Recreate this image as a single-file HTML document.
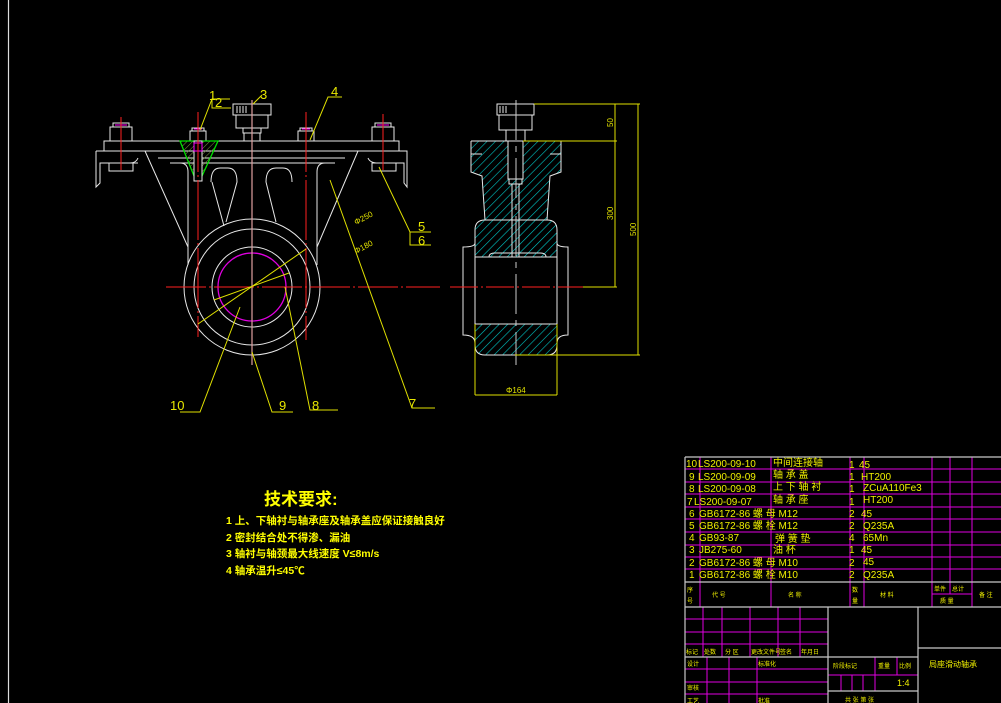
<!DOCTYPE html>
<html><head><meta charset="utf-8"><style>
html,body{margin:0;padding:0;background:#000;width:1001px;height:703px;overflow:hidden}
svg{display:block}
text{font-family:"Liberation Sans","Noto Sans CJK SC",sans-serif}
</style></head><body>
<svg width="1001" height="703" viewBox="0 0 1001 703" xmlns="http://www.w3.org/2000/svg">
<defs>
<pattern id="hc" width="6" height="6" patternUnits="userSpaceOnUse" patternTransform="rotate(45)"><line x1="0" y1="0" x2="0" y2="6" stroke="#00c8c8" stroke-width="1.2"/></pattern>
<pattern id="hg" width="4" height="4" patternUnits="userSpaceOnUse" patternTransform="rotate(45)"><line x1="0" y1="0" x2="0" y2="4" stroke="#7a9a40" stroke-width="1"/></pattern>
</defs>
<line x1="8.5" y1="0" x2="8.5" y2="703" stroke="#ddd" stroke-width="1.2"/>

<!-- FRONT VIEW -->
<g fill="none" stroke="#e8e8e8" stroke-width="1">
<!-- top plate -->
<rect x="104" y="141" width="295" height="10"/>
<path d="M96 151 H407 V187 L404 183 V163 H399 M96 151 V187 L100 183 V163 H138"/>
<path d="M100 163 H118 M138 158 Q136 163 130 163 M368 158 Q370 163 378 163 H404"/>
<!-- body -->
<path d="M145 151 L188 247 V265 M358 151 L317 247 V265"/>
<path d="M158 158 H345 M170 163 H335"/>
<path d="M180 163 Q188 163 188 172 V247 M317 247 V172 Q317 163 325 163"/>
<path d="M211 182 Q211 168 220 168 H228 Q237 168 237 182 L226 222 M292 182 Q292 168 283 168 H276 Q266 168 266 182 L276 222"/>
<path d="M212 182 L224 226"/>
<!-- circles -->
<circle cx="252" cy="287" r="68"/>
<circle cx="252" cy="287" r="58"/>
<circle cx="252" cy="287" r="40"/>
<!-- nuts -->
<rect x="110" y="127" width="22" height="14"/><rect x="113" y="123" width="16" height="4"/>
<rect x="372" y="127" width="22" height="14"/><rect x="375" y="123" width="16" height="4"/>
<rect x="109" y="163" width="24" height="8"/><rect x="372" y="163" width="24" height="8"/>
<rect x="190" y="131" width="16" height="10"/><rect x="192" y="128" width="12" height="3"/>
<rect x="298" y="131" width="16" height="10"/><rect x="300" y="128" width="12" height="3"/>
<!-- oil cup -->
<rect x="233" y="104" width="38" height="11"/>
<path d="M236 115 V128 H268 V115 M243 128 V133 H261 V128 M244 133 V141 M260 133 V141"/>
<path d="M237 106 V113 M240 106 V113 M243 106 V113 M246 106 V113"/>
</g>
<!-- green hatch -->
<path d="M180 141 H218 L202 176 Q198 182 194 176 Z" fill="url(#hg)" stroke="#00e000" stroke-width="1.3"/>
<rect x="194" y="141" width="8" height="40" fill="#000" stroke="#e8e8e8"/>
<rect x="194" y="143" width="8" height="8" fill="none" stroke="#ff00ff"/>
<path d="M115 125 H127 M377 125 H389 M194 129 H202 M302 129 H310" stroke="#ff00ff"/>
<circle cx="252" cy="287" r="34" fill="none" stroke="#e000e0" stroke-width="1.3"/>
<!-- centerlines -->
<g stroke="#ff2020" stroke-width="1">
<line x1="166" y1="287" x2="440" y2="287" stroke-dasharray="40 3 2 3"/>
<line x1="198" y1="112" x2="198" y2="337" stroke-dasharray="60 3 2 3"/>
<line x1="306" y1="112" x2="306" y2="340" stroke-dasharray="60 3 2 3"/>
<line x1="121" y1="117" x2="121" y2="170"/>
<line x1="383" y1="114" x2="383" y2="170"/>
</g>
<line x1="252" y1="100" x2="252" y2="365" stroke="#e0a0a0" stroke-width="1.2"/>
<!-- leaders -->
<g stroke="#e0e000" fill="none" stroke-width="1">
<path d="M200 130 L212 99 H230 M212 99 V108 H231"/>
<path d="M253 104 L262 95"/>
<path d="M310 140 L328 97 H342"/>
<path d="M379 167 L410 232 H431 M410 232 V245 H431"/>
<path d="M330 180 L412 408 H435"/>
<path d="M285 287 L310 410 H338"/>
<path d="M252 352 L272 412 H293"/>
<path d="M240 307 L200 412 H180"/>
<path d="M198 324 L306 249 M214 300 L289 273"/>
</g>
<g fill="#e8e800" font-size="13">
<text x="209" y="100">1</text><text x="215" y="107">2</text><text x="260" y="99">3</text><text x="331" y="96">4</text>
<text x="418" y="231">5</text><text x="418" y="245">6</text>
<text x="409" y="408">7</text><text x="312" y="410">8</text><text x="279" y="410">9</text><text x="170" y="410">10</text>
</g>
<g fill="#e0e000" font-size="8">
<text x="356" y="225" transform="rotate(-28 356 225)">Φ250</text>
<text x="356" y="254" transform="rotate(-28 356 254)">Φ180</text>
</g>

<!-- SIDE VIEW -->
<path d="M471 141 H561 V172 L550 176 L547 220 H485 L482 176 L471 172 Z" fill="url(#hc)"/>
<path d="M485 220 H547 Q557 220 557 230 V257 H475 V230 Q475 220 485 220 Z" fill="url(#hc)"/>
<path d="M475 324 H557 V345 Q557 355 547 355 H485 Q475 355 475 345 Z" fill="url(#hc)"/>
<g fill="none" stroke="#e8e8e8" stroke-width="1">
<path d="M471 141 H561 V172 L550 176 L547 220 M471 141 V172 L482 176 L485 220"/>
<path d="M482 154 H471 M550 154 H561"/>
<path d="M485 220 H547 Q557 220 557 230 V345 Q557 355 547 355 H485 Q475 355 475 345 V230 Q475 220 485 220"/>
<path d="M475 257 H557 M475 324 H557"/>
<path d="M475 243 Q475 247 463 247 V335 Q475 335 475 343 M557 243 Q557 247 568 247 V335 Q557 335 557 343"/>
<rect x="497" y="104" width="37" height="11"/>
<path d="M499 115 V130 H532 V115 M506 130 V141 M525 130 V141"/>
<rect x="508" y="141" width="15" height="38" fill="#000"/>
<path d="M509 179 V184 H522 V179 M512 184 V257 M519 184 V257"/>
<path d="M489 257 Q489 253 495 253 H540 Q546 253 546 257"/>
<path d="M500 106 V113 M503 106 V113 M506 106 V113"/>
</g>
<line x1="516" y1="100" x2="516" y2="365" stroke="#ccc" stroke-dasharray="40 6 6 6"/>
<line x1="450" y1="287" x2="583" y2="287" stroke="#ff2020" stroke-dasharray="28 3 2 3"/>
<g stroke="#e0e000" fill="none" stroke-width="1">
<path d="M534 104 H640 M523 141 H617 M583 287 H617 M515 355 H640"/>
<path d="M615 104 V287 M638 104 V355"/>
<path d="M475 324 V395 M557 324 V395 M475 395 H557"/>
</g>
<g fill="#e0e000" font-size="8">
<text x="613" y="127" transform="rotate(-90 613 127)">50</text>
<text x="613" y="220" transform="rotate(-90 613 220)">300</text>
<text x="636" y="236" transform="rotate(-90 636 236)">500</text>
<text x="506" y="393">Φ164</text>
</g>

<!-- TECH REQUIREMENTS -->
<g fill="#ffff00" font-weight="bold">
<text x="264" y="505" font-size="17">技术要求:</text>
<g font-size="10.5">
<text x="226" y="524">1  上、下轴衬与轴承座及轴承盖应保证接触良好</text>
<text x="226" y="541">2  密封结合处不得渗、漏油</text>
<text x="226" y="557">3  轴衬与轴颈最大线速度 V≤8m/s</text>
<text x="226" y="574">4  轴承温升≤45℃</text>
</g></g>

<!-- TABLE -->
<g stroke="#e000e0" stroke-width="1" fill="none">
<path d="M685 469H1001M685 482H1001M685 494H1001M685 507H1001M685 519H1001M685 532H1001M685 545H1001M685 557H1001M685 569H1001M685 582H1001"/>
<path d="M700 457V607M771 457V607M850 457V607M864 457V607M932 457V607M950 457V594M972 457V607M932 594H972"/>
<path d="M685 619H828M685 632H828M685 644H828M685 669H828M685 682H828M685 694H828"/>
<path d="M703 607V657M722 607V657M750 607V657M778 607V657M800 607V657"/>
<path d="M707 657V703M729 657V703M757 657V703"/>
<path d="M828 675H918M875 657V691M897 657V675M841 675V691M852 675V691M863 675V691"/>
</g>
<g stroke="#c8c8c8" stroke-width="1.2" fill="none">
<path d="M685 457H1001M685 457V703M685 582H1001M685 607H1001M685 657H918M828 607V703M918 607V703M918 648H1001M828 691H918"/>
</g>
<g fill="#f0f000" font-size="10">
<text x="686" y="467">10</text><text x="698" y="467">LS200-09-10</text><text x="773" y="466">中间连接轴</text><text x="849" y="468">1</text><text x="859" y="468">45</text>
<text x="689" y="480">9</text><text x="698" y="480">LS200-09-09</text><text x="773" y="478">轴  承  盖</text><text x="849" y="480">1</text><text x="861" y="480">HT200</text>
<text x="689" y="492">8</text><text x="698" y="492">LS200-09-08</text><text x="773" y="490">上 下 轴 衬</text><text x="849" y="492">1</text><text x="863" y="491">ZCuA110Fe3</text>
<text x="687" y="505">7</text><text x="694" y="505">LS200-09-07</text><text x="773" y="503">轴  承  座</text><text x="849" y="505">1</text><text x="863" y="503">HT200</text>
<text x="689" y="517">6</text><text x="699" y="517">GB6172-86  螺 母     M12</text><text x="849" y="517">2</text><text x="861" y="517">45</text>
<text x="689" y="529">5</text><text x="699" y="529">GB6172-86  螺 栓     M12</text><text x="849" y="529">2</text><text x="863" y="529">Q235A</text>
<text x="689" y="541">4</text><text x="699" y="541">GB93-87</text><text x="775" y="542">弹   簧   垫</text><text x="849" y="541">4</text><text x="863" y="541">65Mn</text>
<text x="689" y="553">3</text><text x="699" y="553">JB275-60</text><text x="773" y="553">油      杯</text><text x="849" y="553">1</text><text x="861" y="553">45</text>
<text x="689" y="566">2</text><text x="699" y="566">GB6172-86  螺 母     M10</text><text x="849" y="566">2</text><text x="863" y="565">45</text>
<text x="689" y="578">1</text><text x="699" y="578">GB6172-86  螺 栓     M10</text><text x="849" y="578">2</text><text x="863" y="578">Q235A</text>
</g>
<g fill="#f0f000" font-size="6">
<text x="687" y="592">序</text><text x="687" y="603">号</text><text x="712" y="597">代       号</text><text x="788" y="597">名       称</text>
<text x="852" y="592">数</text><text x="852" y="603">量</text><text x="880" y="597">材       料</text>
<text x="934" y="591">单件</text><text x="952" y="591">总计</text><text x="940" y="603">质   量</text><text x="979" y="597">备 注</text>
<text x="686" y="654">标记</text><text x="704" y="654">处数</text><text x="725" y="654">分  区</text><text x="751" y="654">更改文件号</text><text x="780" y="654">签名</text><text x="801" y="654">年月日</text>
<text x="687" y="666">设计</text><text x="758" y="666">标准化</text><text x="687" y="690">审核</text><text x="687" y="703">工艺</text><text x="758" y="703">批准</text>
<text x="833" y="668">阶段标记</text><text x="878" y="668">重量</text><text x="899" y="668">比例</text>
<text x="845" y="702">共   张  第   张</text>
</g>
<text x="897" y="686" fill="#f0f000" font-size="9">1:4</text>
<text x="929" y="667" fill="#f0f000" font-size="8">局座滑动轴承</text>
</svg>
</body></html>
